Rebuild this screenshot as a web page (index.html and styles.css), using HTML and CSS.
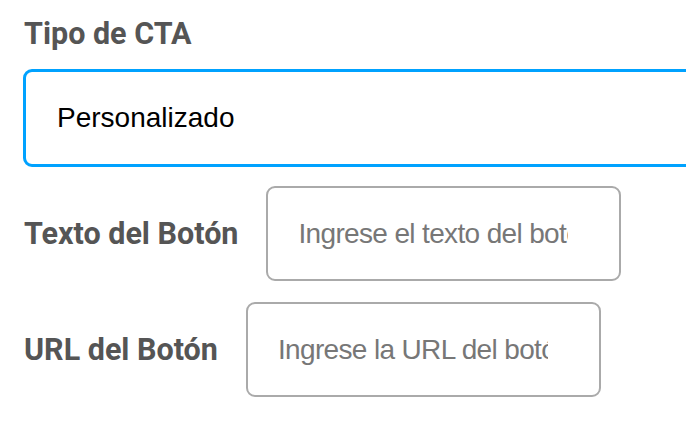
FILE: index.html
```html
<!DOCTYPE html>
<html lang="es">
<head>
<meta charset="utf-8">
<link rel="stylesheet" href="styles.css">
</head>
<body>
<div class="form">
  <div class="field">
    <div class="title">Tipo de CTA</div>
    <div class="select">Personalizado</div>
  </div>
  <div class="row">
    <label class="label" for="t">Texto del Botón</label>
    <input class="input" id="t" type="text" placeholder="Ingrese el texto del botón">
  </div>
  <div class="row">
    <label class="label" for="u">URL del Botón</label>
    <input class="input" id="u" type="text" placeholder="Ingrese la URL del botón">
  </div>
</div>
</body>
</html>
```
FILE: styles.css
```css
html, body {
  margin: 0;
  padding: 0;
  background: #fff;
  overflow: hidden;
}
.form {
  padding: 17px 0 0 24px;
  display: flex;
  flex-direction: column;
  overflow: hidden;
}
.title {
  font-family: Roboto, "Liberation Sans", sans-serif;
  font-weight: 700;
  font-size: 30.5px;
  color: #555;
  line-height: 34px;
}
.select {
  margin-top: 18px;
  margin-left: -1px;
  width: 700px;
  height: 92px;
  border: 3px solid #00a2ff;
  border-radius: 9px;
  box-sizing: content-box;
  display: flex;
  align-items: center;
  padding-left: 31px;
  font-family: "Liberation Sans", Arial, sans-serif;
  font-size: 28px;
  color: #000;
}
.row {
  display: flex;
  align-items: center;
  gap: 28px;
  margin-top: 19px;
}
.row + .row {
  margin-top: 21px;
}
.label {
  font-family: Roboto, "Liberation Sans", sans-serif;
  font-weight: 700;
  font-size: 30.5px;
  color: #555;
}
.input {
  box-sizing: border-box;
  width: 355px;
  height: 95px;
  border: 2px solid #aaa;
  border-radius: 9px;
  padding: 0 51px 0 30px;
  font-family: "Liberation Sans", Arial, sans-serif;
  font-size: 28px;
  color: #000;
  background: #fff;
  outline: none;
}
.input::placeholder {
  color: #777;
  letter-spacing: -0.65px;
}
```
